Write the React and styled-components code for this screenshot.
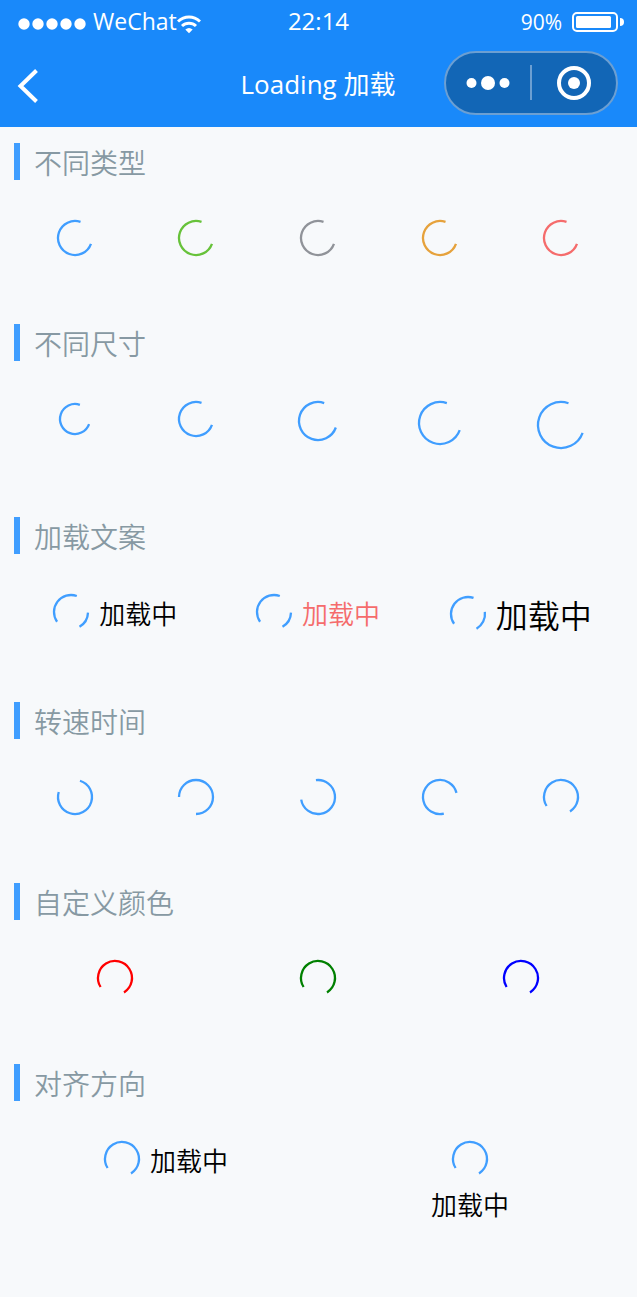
import React from "react";
import styled, { createGlobalStyle } from "styled-components";

const GlobalStyle = createGlobalStyle`
  *, *::before, *::after { box-sizing: border-box; }
  body {
    margin: 0;
    background: #f7f9fb;
    font-family: "Open Sans", "Noto Sans CJK SC", sans-serif;
    color: #000;
  }
`;

const Page = styled.div`
  min-height: 100vh;
  background: #f7f9fb;
`;

const Header = styled.header`
  background: #1989fa;
  color: #fff;
`;

const StatusBar = styled.div`
  display: grid;
  grid-template-columns: 1fr auto 1fr;
  align-items: center;
  height: 40px;
  padding: 0 13px 0 18px;
  line-height: 40px;
`;

const Carrier = styled.div`
  display: flex;
  align-items: center;
  font-size: 23px;
`;

const SignalDots = styled.svg`
  margin: 5px 7px 0 0;
`;

const WifiIcon = styled.svg`
  margin-top: 6px;
`;

const Clock = styled.time`
  margin-right: 5px;
  font-size: 24px;
  line-height: 38px;
`;

const Power = styled.div`
  display: flex;
  align-items: center;
  justify-content: flex-end;
  gap: 10px;
  padding-top: 2px;
  font-size: 21px;
`;

const NavBar = styled.nav`
  display: grid;
  grid-template-columns: 1fr auto 1fr;
  align-items: center;
  height: 87px;
  padding: 0 19px 2px 16px;
`;

const BackButton = styled.button`
  display: flex;
  justify-self: start;
  padding: 0;
  margin-top: 6px;
  border: 0;
  background: none;
  color: inherit;
`;

const NavTitle = styled.h1`
  margin: 3px 0 0 2px;
  font-size: 26px;
  font-weight: 400;
  line-height: 40px;
`;

const Capsule = styled.div`
  display: flex;
  align-items: center;
  justify-self: end;
  width: 174px;
  height: 64px;
  border: 2px solid #6c9fd2;
  border-radius: 32px;
  background: #1266b6;
`;

const CapsuleButton = styled.button`
  display: flex;
  flex: 1;
  align-items: center;
  justify-content: center;
  height: 100%;
  padding: 0;
  border: 0;
  background: none;
  color: #fff;
`;

const CapsuleDivider = styled.span`
  width: 2px;
  height: 35px;
  background: #6c9fd2;
`;

const Content = styled.main`
  padding: 16px 15px 0 14px;
`;

const Section = styled.section`
  padding-bottom: 68px;
`;

const SectionTitle = styled.h2`
  margin: 0 0 40px;
  padding: 4px 0 0 14px;
  border-left: 6px solid #409eff;
  color: #8799a3;
  font-size: 28px;
  font-weight: 350;
  line-height: 33px;
`;

const Row = styled.div`
  display: flex;
  align-items: flex-start;
`;

const LoadingBox = styled.div`
  display: flex;
  flex: 1;
  flex-direction: ${(p) => (p.$vertical ? "column" : "row")};
  align-items: center;
  justify-content: center;
  gap: ${(p) => (p.$vertical ? 8 : 10)}px;
  min-height: 36px;
`;

const Ring = styled.svg`
  display: block;
  flex: none;
  overflow: visible;
`;

const LoadingText = styled.span`
  padding-top: 4px;
  color: ${(p) => p.$color || "#000"};
  font-size: ${(p) => (p.$large ? 32 : 26)}px;
  font-weight: 350;
  line-height: ${(p) => (p.$large ? 36 : 32)}px;
`;

const FULL = [[110, 379]];
const SPLIT = [[92, 150], [235, 380]];
const BOTTOM = [[238, 508]];

function arcPath(size, [from, to]) {
  const c = size / 2;
  const r = c - 1;
  const point = (deg) => {
    const a = (deg * Math.PI) / 180;
    return `${(c + r * Math.sin(a)).toFixed(2)} ${(c - r * Math.cos(a)).toFixed(2)}`;
  };
  return `M${point(from)}A${r} ${r} 0 ${to - from > 180 ? 1 : 0} 1 ${point(to)}`;
}

function Loading({ color = "#409eff", size = 36, arcs = FULL, text, textColor, large, vertical }) {
  return (
    <LoadingBox $vertical={vertical} role="status">
      <Ring width={size} height={size} viewBox={`0 0 ${size} ${size}`} aria-hidden="true">
        {arcs.map((arc) => (
          <path key={arc[0]} d={arcPath(size, arc)} fill="none" stroke={color} strokeWidth="2.3" />
        ))}
      </Ring>
      {text && <LoadingText $color={textColor} $large={large}>{text}</LoadingText>}
    </LoadingBox>
  );
}

const sections = [
  {
    title: "不同类型",
    items: ["#409eff", "#67c23a", "#909399", "#e6a23c", "#f56c6c"].map((color) => ({ color })),
  },
  { title: "不同尺寸", items: [32, 36, 40, 44, 48].map((size) => ({ size })) },
  {
    title: "加载文案",
    items: [
      { text: "加载中", arcs: SPLIT },
      { text: "加载中", arcs: SPLIT, textColor: "#f56c6c" },
      { text: "加载中", arcs: [[83, 150], [235, 379]], large: true },
    ],
  },
  {
    title: "转速时间",
    items: [[17, 287], [270, 540], [353, 621], [167, 436], [238, 508]].map((arc) => ({ arcs: [arc] })),
  },
  {
    title: "自定义颜色",
    items: ["#ff0000", "#008000", "#0000ff"].map((color) => ({ color, arcs: BOTTOM })),
  },
  {
    title: "对齐方向",
    items: [
      { text: "加载中", arcs: BOTTOM },
      { text: "加载中", arcs: BOTTOM, vertical: true },
    ],
  },
];

export default function App() {
  return (
    <Page>
      <GlobalStyle />
      <Header>
        <StatusBar>
          <Carrier>
            <SignalDots width="68" height="12" viewBox="0 0 68 12" fill="#fff" aria-hidden="true">
              {[6, 20, 34, 48, 62].map((x) => <circle key={x} cx={x} cy="6" r="5.7" />)}
            </SignalDots>
            WeChat
            <WifiIcon width="24" height="19" viewBox="0 0 24 19" fill="none" stroke="#fff" aria-hidden="true">
              <path d="M1 6.5C7.5 .4 16.5 .4 23 6.5" strokeWidth="3" />
              <path d="M5 11C9 7.3 15 7.3 19 11" strokeWidth="3" />
              <path d="M8.3 14.5Q12 11.5 15.7 14.5L12 18.2Z" fill="#fff" stroke="none" />
            </WifiIcon>
          </Carrier>
          <Clock>22:14</Clock>
          <Power>
            90%
            <svg width="52" height="20" viewBox="0 0 52 20" aria-hidden="true">
              <rect x="1" y="1" width="44" height="18" rx="4" fill="none" stroke="#fff" strokeWidth="2" />
              <rect x="4" y="4" width="35" height="12" rx="1.5" fill="#fff" />
              <path d="M48 6Q52 6 52 10T48 14Z" fill="#fff" />
            </svg>
          </Power>
        </StatusBar>
        <NavBar>
          <BackButton type="button" aria-label="返回">
            <svg width="24" height="36" viewBox="0 0 24 36" fill="none" stroke="#fff" strokeWidth="4" aria-hidden="true">
              <path d="M20.5 2.5L4.5 18L20.5 33.5" />
            </svg>
          </BackButton>
          <NavTitle>Loading 加载</NavTitle>
          <Capsule>
            <CapsuleButton type="button" aria-label="更多">
              <svg width="44" height="16" viewBox="0 0 44 16" fill="currentColor" aria-hidden="true">
                <circle cx="5.5" cy="8" r="5" />
                <circle cx="22" cy="8" r="7" />
                <circle cx="38.5" cy="8" r="5" />
              </svg>
            </CapsuleButton>
            <CapsuleDivider />
            <CapsuleButton type="button" aria-label="关闭">
              <svg width="34" height="34" viewBox="0 0 34 34" aria-hidden="true">
                <circle cx="17" cy="17" r="15" fill="none" stroke="currentColor" strokeWidth="4" />
                <circle cx="17" cy="17" r="6" fill="currentColor" />
              </svg>
            </CapsuleButton>
          </Capsule>
        </NavBar>
      </Header>
      <Content>
        {sections.map(({ title, items }) => (
          <Section key={title}>
            <SectionTitle>{title}</SectionTitle>
            <Row>
              {items.map((item, i) => <Loading key={i} {...item} />)}
            </Row>
          </Section>
        ))}
      </Content>
    </Page>
  );
}
